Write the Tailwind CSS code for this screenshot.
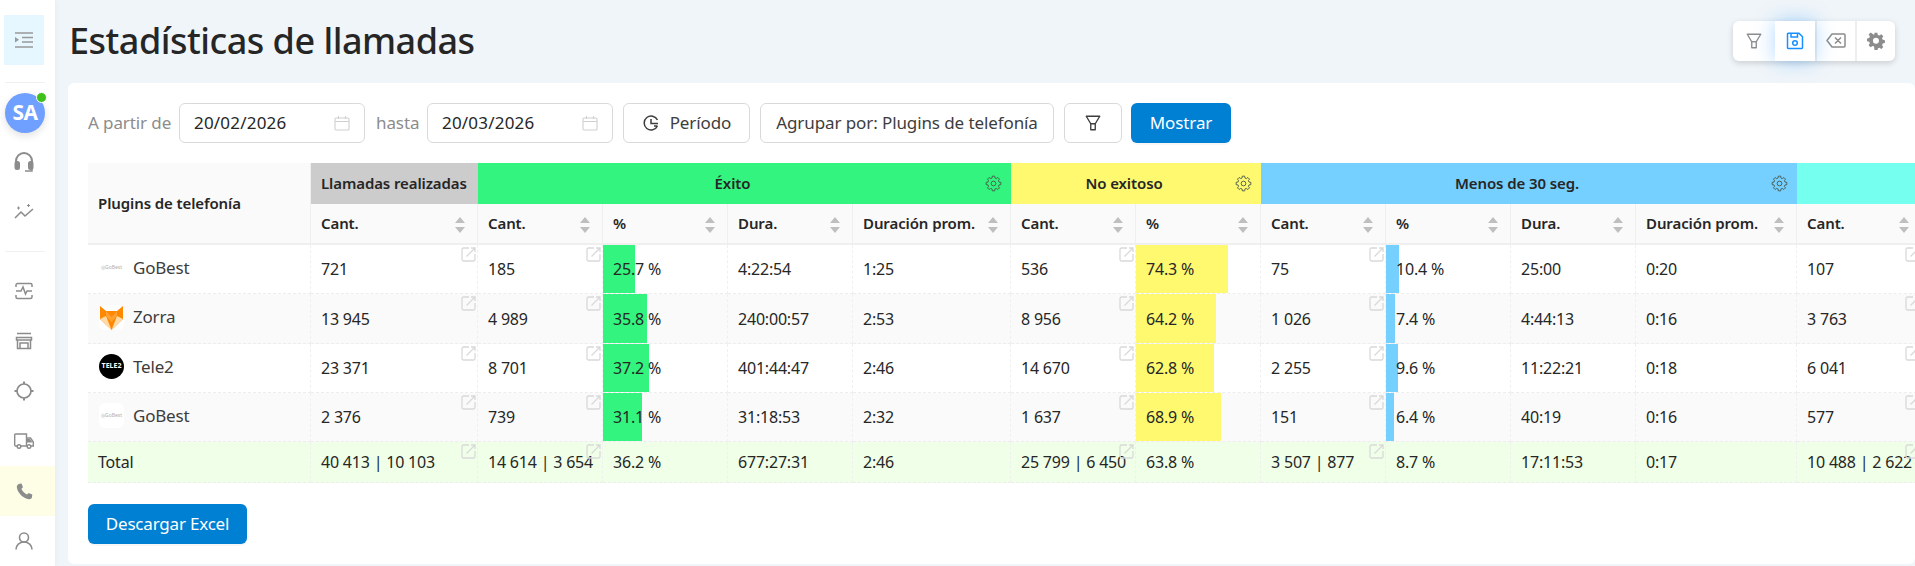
<!doctype html>
<html lang="es">
<head>
<meta charset="utf-8">
<title>Estadísticas de llamadas</title>
<script src="https://cdn.jsdelivr.net/npm/@tailwindcss/browser@4"></script>
</head>
<body class="w-[1915px] h-[566px] overflow-hidden bg-[#f0f5f9] font-['Noto_Sans',sans-serif] text-[16px] tracking-[-0.2px] text-[#262626]">
<svg class="hidden">
  <symbol id="o" viewBox="0 0 15 15"><path d="M8 1H2.500A1.500 1.500 0 0 0 1 2.500V12.500A1.500 1.500 0 0 0 2.500 14H12.500A1.500 1.500 0 0 0 14 12.500V7M5.500 9.500L14 1M10 1H14V5" fill="none" stroke="#d9d9d9" stroke-width="1.300"/></symbol>
  <symbol id="g" viewBox="0 0 24 24"><path transform="translate(12 12)" d="M7.730 2.070L10.370 1.640L10.370 -1.640L7.730 -2.070L6.930 -4L8.490 -6.170L6.170 -8.490L4 -6.930L2.070 -7.730L1.640 -10.370L-1.640 -10.370L-2.070 -7.730L-4 -6.930L-6.170 -8.490L-8.490 -6.170L-6.930 -4L-7.730 -2.070L-10.370 -1.640L-10.370 1.640L-7.730 2.070L-6.930 4L-8.490 6.170L-6.170 8.490L-4 6.930L-2.070 7.730L-1.640 10.370L1.640 10.370L2.070 7.730L4 6.930L6.170 8.490L8.490 6.170L6.930 4Z" fill="none" stroke="#4a5a4f" stroke-width="1.300" stroke-linejoin="round"/><circle cx="12" cy="12" r="3.300" fill="none" stroke="#4a5a4f" stroke-width="1.300"/></symbol>
  <symbol id="s" viewBox="0 0 10 16"><path d="M5 0L10 6H0zM5 16L0 10H10z" fill="#bfbfbf"/></symbol>
  <symbol id="f" viewBox="0 0 24 24"><path d="M3 3H21L15 13V21H9V13z" fill="none" stroke="currentColor" stroke-width="1.800" stroke-linejoin="round"/><path d="M9 13H15" stroke="currentColor" stroke-width="1.800"/></symbol>
  <symbol id="c" viewBox="0 0 16 16"><path d="M1 4A1 1 0 0 1 2 3H14A1 1 0 0 1 15 4V14A1 1 0 0 1 14 15H2A1 1 0 0 1 1 14ZM1 6.500H15M4.500 1V4M11.500 1V4" fill="none" stroke="#d0d0d0" stroke-width="1.100"/></symbol>
</svg>
<div class="flex h-full">
  <aside class="w-[55px] shrink-0 h-full bg-white flex flex-col items-stretch shadow-[1px_0_6px_rgba(0,0,0,0.04)] z-10">
    <div class="pt-[15px] pl-[4px]">
      <div class="w-[40px] h-[50px] bg-[#e6f7ff] flex items-center justify-center">
        <svg class="w-[18px] h-[16px]" viewBox="0 0 18 16" fill="none" stroke="#999" stroke-width="1.500"><path d="M0 1H18M7 5.500H18M7 10H18M0 15H18"/><path d="M0 5L4 7.800L0 10.500Z" fill="#999" stroke="none"/></svg>
      </div>
    </div>
    <div class="mt-[17px] mx-[5px] w-[40px] h-px bg-[#f0f0f0]"></div>
    <div class="relative mt-[10px] ml-[5px] size-[40px] rounded-full bg-[#6f9fff] text-white font-bold text-[21px] tracking-[-0.5px] flex items-center justify-center shadow-[0_3px_8px_rgba(0,0,0,0.12)]">SA
      <span class="absolute -top-[1px] -right-[2px] size-[11px] rounded-full bg-[#3fc11a] border-[1.500px] border-white"></span>
    </div>
    <div class="h-[50px] mt-[4px] flex items-center justify-center pr-[7px]">
      <svg class="size-[22px]" viewBox="0 0 22 22" fill="none" stroke="#8c8c8c" stroke-width="2"><path d="M3 13V10A8 8 0 0 1 19 10V13"/><rect x="2.500" y="11" width="3.500" height="7" rx="1.500" fill="#8c8c8c"/><rect x="16" y="11" width="3.500" height="7" rx="1.500" fill="#8c8c8c"/><path d="M19 18V20H12" stroke-width="1.400"/></svg>
    </div>
    <div class="h-[49px] flex items-center justify-center pr-[7px]">
      <svg class="size-[20px]" viewBox="0 0 20 20" fill="none" stroke="#8c8c8c" stroke-width="1.600"><path d="M1 16L7 10L11 14L19 7" stroke-linejoin="round"/><path d="M3 6H6M4.500 4.500V7.500M13 3.500H16M14.500 2V5" stroke-width="1"/></svg>
    </div>
    <div class="mt-[15px] mx-[5px] w-[40px] h-px bg-[#f0f0f0]"></div>
    <div class="h-[50px] mt-[14px] flex items-center justify-center pr-[7px]">
      <svg class="size-[18px]" viewBox="0 0 18 18" fill="none" stroke="#8c8c8c" stroke-width="1.500"><path d="M1 5V3A1.500 1.500 0 0 1 2.500 1.500H15.500A1.500 1.500 0 0 1 17 3V5M1 13V15A1.500 1.500 0 0 0 2.500 16.500H15.500A1.500 1.500 0 0 0 17 15V13M1 9H6L8 5L10.500 12L12 9H17"/></svg>
    </div>
    <div class="h-[50px] flex items-center justify-center pr-[7px]">
      <svg class="size-[18px]" viewBox="0 0 18 18" fill="none" stroke="#8c8c8c" stroke-width="1.500"><path d="M2 1.500H16M1.500 5.500H16.500L16.500 8H1.500ZM2.500 8V16.500H15.500V8M5 16.500V11H13V16.500"/></svg>
    </div>
    <div class="h-[50px] flex items-center justify-center pr-[7px]">
      <svg class="size-[20px]" viewBox="0 0 20 20" fill="none" stroke="#8c8c8c" stroke-width="1.700"><circle cx="10" cy="10" r="7"/><path d="M10 0.500V3M10 17V19.500M0.500 10H3M17 10H19.500" stroke-width="2"/></svg>
    </div>
    <div class="h-[50px] flex items-center justify-center pr-[7px]">
      <svg class="w-[20px] h-[16px]" viewBox="0 0 20 16" fill="none" stroke="#8c8c8c" stroke-width="1.400"><path d="M3 13H1.500A1 1 0 0 1 .7 12V2A1 1 0 0 1 1.700 1H12.500V13H7M12.500 5H16.500L19.300 9V13H17M12.500 13H13"/><circle cx="5" cy="13.500" r="1.800"/><circle cx="15" cy="13.500" r="1.800"/><path d="M13 6H16L18.500 9.500H13Z" fill="#8c8c8c" stroke="none"/></svg>
    </div>
    <div class="h-[50px] bg-[#fefee6] flex items-center justify-center pr-[7px]">
      <svg class="size-[17px]" viewBox="0 0 17 17"><path d="M3.500.8L5.500.5 7 4.300 5.400 5.800C6.200 8 8.500 10.500 11 11.500L12.500 10 16.300 11.500 16 14C15.700 15.500 14.500 16.300 13 16.200 7 15.500 1.300 9.500.8 4 .7 2.500 1.800 1.200 3.500.8Z" fill="#8c8c8c"/></svg>
    </div>
    <div class="h-[50px] flex items-center justify-center pr-[7px]">
      <svg class="size-[18px]" viewBox="0 0 18 18" fill="none" stroke="#8c8c8c" stroke-width="1.600"><circle cx="9" cy="5.500" r="4.500"/><path d="M1 17.500C1 13 4.500 10 9 10S17 13 17 17.500"/></svg>
    </div>
  </aside>

  <main class="flex-1 min-w-0 h-full flex flex-col">
    <header class="h-[83px] shrink-0 flex items-center justify-between pl-[14px] pr-[20px]">
      <h1 class="text-[36px] leading-none font-medium tracking-[-0.5px] text-[#262626] -mt-[1px]">Estadísticas de llamadas</h1>
      <div class="flex w-[162px] h-[40px] -mt-[2px] rounded-md bg-white shadow-[0_2px_6px_rgba(0,0,0,0.16)]">
        <div class="w-[42px] flex items-center justify-center text-[#8c8c8c]"><svg class="size-[18px]"><use href="#f"/></svg></div>
        <div class="w-[40px] flex items-center justify-center bg-white shadow-[0_0_20px_rgba(24,144,255,0.35)] z-10">
          <svg class="size-[18px]" viewBox="0 0 18 18" fill="none" stroke="#1890ff" stroke-width="1.500"><path d="M1.500 2A.7.7 0 0 1 2.200 1.200H13L16.500 4.700V15.800A.7.7 0 0 1 15.800 16.500H2.200A.7.7 0 0 1 1.500 15.800ZM5 1.500V5H11.500V1.500"/><circle cx="9" cy="11" r="2.300"/></svg>
        </div>
        <div class="w-[40px] flex items-center justify-center border-l-2 border-[#eeeeee]">
          <svg class="w-[20px] h-[15px]" viewBox="0 0 20 15" fill="none" stroke="#8c8c8c" stroke-width="1.500"><path d="M6 1H18A1 1 0 0 1 19 2V13A1 1 0 0 1 18 14H6L1 7.500ZM9 4.500L15 10.500M15 4.500L9 10.500"/></svg>
        </div>
        <div class="w-[40px] flex items-center justify-center border-l-2 border-[#eeeeee]">
          <svg class="size-[18px]" viewBox="0 0 18 18"><path fill="#8c8c8c" fill-rule="evenodd" d="M7.500.5h3l.5 2.300 1.700.7 2-1.300 2.100 2.100-1.300 2 .7 1.700 2.300.5v3l-2.300.5-.7 1.700 1.300 2-2.100 2.100-2-1.300-1.700.7-.5 2.300h-3L7 15.200l-1.700-.7-2 1.300L1.200 13.700l1.300-2-.7-1.700L-.5 9.500v-3l2.300-.5.7-1.700-1.300-2L3.300 .2l2 1.300L7 2.800zM9 5.700a3.200 3.200 0 1 0 0 6.400 3.200 3.200 0 0 0 0-6.400z" transform="translate(.5 .3) scale(.94)"/></svg>
        </div>
      </div>
    </header>

    <section class="ml-[13px] h-[481px] bg-white rounded-md overflow-hidden pl-[20px] pt-[20px]">
      <div class="flex items-center h-[40px] text-[17px] tracking-[-0.1px]">
        <span class="w-[82px] shrink-0 text-[#8c8c8c] whitespace-nowrap mr-[9px]">A partir de</span>
        <div class="w-[186px] h-[40px] border border-[#d9d9d9] rounded-md flex items-center justify-between pl-[14px] pr-[14px] text-[#262626] tracking-[0.2px]"><span>20/02/2026</span><svg class="size-[16px]"><use href="#c"/></svg></div>
        <span class="w-[40px] shrink-0 text-[#8c8c8c] mx-[11px]">hasta</span>
        <div class="w-[186px] h-[40px] border border-[#d9d9d9] rounded-md flex items-center justify-between pl-[14px] pr-[14px] text-[#262626] tracking-[0.2px]"><span>20/03/2026</span><svg class="size-[16px]"><use href="#c"/></svg></div>
        <button class="ml-[10px] w-[127px] h-[40px] border border-[#d9d9d9] rounded-md flex items-center justify-center gap-[10px] text-[#3d3d3d]">
          <svg class="size-[18px]" viewBox="0 0 18 18" fill="none" stroke="#3d3d3d" stroke-width="1.500"><path d="M15.500 6A7 7 0 1 0 15.500 12M9 5V9.500H16M12 12H15.500"/></svg>Período</button>
        <button class="ml-[10px] w-[294px] h-[40px] border border-[#d9d9d9] rounded-md text-[#3d3d3d] whitespace-nowrap">Agrupar por: Plugins de telefonía</button>
        <button class="ml-[10px] w-[58px] h-[40px] border border-[#d9d9d9] rounded-md flex items-center justify-center text-[#3d3d3d]"><svg class="size-[18px]"><use href="#f"/></svg></button>
        <button class="ml-[9px] w-[100px] h-[40px] rounded-md bg-[#0080d2] text-white shadow-[0_2px_0_rgba(0,0,0,0.03)]">Mostrar</button>
      </div>

      <table class="mt-[20px] table-fixed w-[1834px] border-separate border-spacing-0 [&_th]:relative [&_th]:p-0 [&_th]:px-[10px] [&_th]:text-left [&_th]:font-semibold [&_th]:text-[15px] [&_th]:tracking-[-0.1px] [&_td]:relative [&_td]:p-0 [&_td]:px-[10px] [&_td]:border-b [&_td]:border-r [&_td]:border-r-[#f0f0f0] [&_td]:border-b-[#ededed] [&_td]:border-dashed [&_td]:whitespace-nowrap">
        <colgroup><col class="w-[223px]"><col class="w-[167px]"><col class="w-[125px]"><col class="w-[125px]"><col class="w-[125px]"><col class="w-[158px]"><col class="w-[125px]"><col class="w-[125px]"><col class="w-[125px]"><col class="w-[125px]"><col class="w-[125px]"><col class="w-[161px]"><col class="w-[125px]"></colgroup>
        <thead class="[&_.h2]:bg-[#fafafa] [&_.h2]:border-b-2 [&_.h2]:border-r [&_.h2]:border-[#efefef]">
          <tr class="h-[41px]">
            <th rowspan="2" class="h2 bg-[#fafafa]">Plugins de telefonía</th>
            <th class="bg-[#cccccc] whitespace-nowrap">Llamadas realizadas</th>
            <th colspan="4" class="bg-[#32f47e] !text-center !pr-[34px] font-semibold">Éxito<svg class="absolute right-[9px] top-[12px] size-[17px]"><use href="#g"/></svg></th>
            <th colspan="2" class="bg-[#fff970] !text-center !pr-[34px]">No exitoso<svg class="absolute right-[9px] top-[12px] size-[17px]"><use href="#g"/></svg></th>
            <th colspan="4" class="bg-[#75cfff] !text-center !pr-[34px]">Menos de 30 seg.<svg class="absolute right-[9px] top-[12px] size-[17px]"><use href="#g"/></svg></th>
            <th class="bg-[#75ffee]"></th>
          </tr>
          <tr class="h-[41px]">
            <th class="h2">Cant.<svg class="absolute right-[12px] top-[13px] w-[10px] h-[16px]"><use href="#s"/></svg></th>
            <th class="h2">Cant.<svg class="absolute right-[12px] top-[13px] w-[10px] h-[16px]"><use href="#s"/></svg></th>
            <th class="h2">%<svg class="absolute right-[12px] top-[13px] w-[10px] h-[16px]"><use href="#s"/></svg></th>
            <th class="h2">Dura.<svg class="absolute right-[12px] top-[13px] w-[10px] h-[16px]"><use href="#s"/></svg></th>
            <th class="h2 whitespace-nowrap">Duración prom.<svg class="absolute right-[12px] top-[13px] w-[10px] h-[16px]"><use href="#s"/></svg></th>
            <th class="h2">Cant.<svg class="absolute right-[12px] top-[13px] w-[10px] h-[16px]"><use href="#s"/></svg></th>
            <th class="h2">%<svg class="absolute right-[12px] top-[13px] w-[10px] h-[16px]"><use href="#s"/></svg></th>
            <th class="h2">Cant.<svg class="absolute right-[12px] top-[13px] w-[10px] h-[16px]"><use href="#s"/></svg></th>
            <th class="h2">%<svg class="absolute right-[12px] top-[13px] w-[10px] h-[16px]"><use href="#s"/></svg></th>
            <th class="h2">Dura.<svg class="absolute right-[12px] top-[13px] w-[10px] h-[16px]"><use href="#s"/></svg></th>
            <th class="h2 whitespace-nowrap">Duración prom.<svg class="absolute right-[12px] top-[13px] w-[10px] h-[16px]"><use href="#s"/></svg></th>
            <th class="h2">Cant.<svg class="absolute right-[12px] top-[13px] w-[10px] h-[16px]"><use href="#s"/></svg></th>
          </tr>
        </thead>
        <tbody>
          <tr class="h-[49px] bg-white">
            <td><div class="flex items-center gap-[9px] pl-[1px] -mt-[3px] text-[17px] text-[#3d3d3d]"><span class="size-[25px] rounded-md bg-white flex items-center justify-center text-[#b0b0b0] text-[5px] tracking-normal">◎GoBest</span>GoBest</div></td>
            <td>721<svg class="absolute top-[2px] right-[1px] size-[15px]"><use href="#o"/></svg></td>
            <td>185<svg class="absolute top-[2px] right-[1px] size-[15px]"><use href="#o"/></svg></td>
            <td><i class="absolute inset-y-0 left-0 bg-[#32f47e]" style="width:25.7%"></i><span class="relative">25.7 %</span></td>
            <td>4:22:54</td><td>1:25</td>
            <td>536<svg class="absolute top-[2px] right-[1px] size-[15px]"><use href="#o"/></svg></td>
            <td><i class="absolute inset-y-0 left-0 bg-[#fff970]" style="width:74.3%"></i><span class="relative">74.3 %</span></td>
            <td>75<svg class="absolute top-[2px] right-[1px] size-[15px]"><use href="#o"/></svg></td>
            <td><i class="absolute inset-y-0 left-0 bg-[#75cfff]" style="width:10.4%"></i><span class="relative">10.4 %</span></td>
            <td>25:00</td><td>0:20</td>
            <td>107<svg class="absolute top-[2px] right-[1px] size-[15px]"><use href="#o"/></svg></td>
          </tr>
          <tr class="h-[50px] bg-[#fafafa]">
            <td><div class="flex items-center gap-[9px] pl-[1px] -mt-[3px] text-[17px] text-[#3d3d3d]"><span class="size-[25px] rounded-md bg-white flex items-center justify-center"><svg class="size-[25px]" viewBox="0 0 25 25"><path d="M1 1L7 6H18L24 1V14L12.500 25L1 14Z" fill="#ff8800"/><path d="M1 14L7 11L12.500 25Z" fill="#ffd9a8"/><path d="M24 14L18 11L12.500 25Z" fill="#ffd9a8"/><path d="M7 6L12.500 12L18 6L18 11L12.500 17L7 11Z" fill="#ffa033"/></svg></span>Zorra</div></td>
            <td>13 945<svg class="absolute top-[2px] right-[1px] size-[15px]"><use href="#o"/></svg></td>
            <td>4 989<svg class="absolute top-[2px] right-[1px] size-[15px]"><use href="#o"/></svg></td>
            <td><i class="absolute inset-y-0 left-0 bg-[#32f47e]" style="width:35.8%"></i><span class="relative">35.8 %</span></td>
            <td>240:00:57</td><td>2:53</td>
            <td>8 956<svg class="absolute top-[2px] right-[1px] size-[15px]"><use href="#o"/></svg></td>
            <td><i class="absolute inset-y-0 left-0 bg-[#fff970]" style="width:64.2%"></i><span class="relative">64.2 %</span></td>
            <td>1 026<svg class="absolute top-[2px] right-[1px] size-[15px]"><use href="#o"/></svg></td>
            <td><i class="absolute inset-y-0 left-0 bg-[#75cfff]" style="width:7.4%"></i><span class="relative">7.4 %</span></td>
            <td>4:44:13</td><td>0:16</td>
            <td>3 763<svg class="absolute top-[2px] right-[1px] size-[15px]"><use href="#o"/></svg></td>
          </tr>
          <tr class="h-[49px] bg-white">
            <td><div class="flex items-center gap-[9px] pl-[1px] -mt-[3px] text-[17px] text-[#3d3d3d]"><span class="size-[25px] rounded-full bg-black text-white flex items-center justify-center text-[7px] font-bold tracking-normal">TELE2</span>Tele2</div></td>
            <td>23 371<svg class="absolute top-[2px] right-[1px] size-[15px]"><use href="#o"/></svg></td>
            <td>8 701<svg class="absolute top-[2px] right-[1px] size-[15px]"><use href="#o"/></svg></td>
            <td><i class="absolute inset-y-0 left-0 bg-[#32f47e]" style="width:37.2%"></i><span class="relative">37.2 %</span></td>
            <td>401:44:47</td><td>2:46</td>
            <td>14 670<svg class="absolute top-[2px] right-[1px] size-[15px]"><use href="#o"/></svg></td>
            <td><i class="absolute inset-y-0 left-0 bg-[#fff970]" style="width:62.8%"></i><span class="relative">62.8 %</span></td>
            <td>2 255<svg class="absolute top-[2px] right-[1px] size-[15px]"><use href="#o"/></svg></td>
            <td><i class="absolute inset-y-0 left-0 bg-[#75cfff]" style="width:9.6%"></i><span class="relative">9.6 %</span></td>
            <td>11:22:21</td><td>0:18</td>
            <td>6 041<svg class="absolute top-[2px] right-[1px] size-[15px]"><use href="#o"/></svg></td>
          </tr>
          <tr class="h-[49px] bg-[#fafafa]">
            <td><div class="flex items-center gap-[9px] pl-[1px] -mt-[3px] text-[17px] text-[#3d3d3d]"><span class="size-[25px] rounded-md bg-white flex items-center justify-center text-[#b0b0b0] text-[5px] tracking-normal">◎GoBest</span>GoBest</div></td>
            <td>2 376<svg class="absolute top-[2px] right-[1px] size-[15px]"><use href="#o"/></svg></td>
            <td>739<svg class="absolute top-[2px] right-[1px] size-[15px]"><use href="#o"/></svg></td>
            <td><i class="absolute inset-y-0 left-0 bg-[#32f47e]" style="width:31.1%"></i><span class="relative">31.1 %</span></td>
            <td>31:18:53</td><td>2:32</td>
            <td>1 637<svg class="absolute top-[2px] right-[1px] size-[15px]"><use href="#o"/></svg></td>
            <td><i class="absolute inset-y-0 left-0 bg-[#fff970]" style="width:68.9%"></i><span class="relative">68.9 %</span></td>
            <td>151<svg class="absolute top-[2px] right-[1px] size-[15px]"><use href="#o"/></svg></td>
            <td><i class="absolute inset-y-0 left-0 bg-[#75cfff]" style="width:6.4%"></i><span class="relative">6.4 %</span></td>
            <td>40:19</td><td>0:16</td>
            <td>577<svg class="absolute top-[2px] right-[1px] size-[15px]"><use href="#o"/></svg></td>
          </tr>
          <tr class="h-[41px] bg-[#f0ffe8]">
            <td>Total</td>
            <td>40 413 | 10 103<svg class="absolute top-[2px] right-[1px] size-[15px]"><use href="#o"/></svg></td>
            <td>14 614 | 3 654<svg class="absolute top-[2px] right-[1px] size-[15px]"><use href="#o"/></svg></td>
            <td>36.2 %</td><td>677:27:31</td><td>2:46</td>
            <td>25 799 | 6 450<svg class="absolute top-[2px] right-[1px] size-[15px]"><use href="#o"/></svg></td>
            <td>63.8 %</td>
            <td>3 507 | 877<svg class="absolute top-[2px] right-[1px] size-[15px]"><use href="#o"/></svg></td>
            <td>8.7 %</td><td>17:11:53</td><td>0:17</td>
            <td>10 488 | 2 622<svg class="absolute top-[2px] right-[1px] size-[15px]"><use href="#o"/></svg></td>
          </tr>
        </tbody>
      </table>
      <button class="mt-[21px] w-[159px] h-[40px] rounded-md bg-[#0080d2] text-white text-[17px] shadow-[0_2px_0_rgba(0,0,0,0.03)]">Descargar Excel</button>
    </section>
  </main>
</div>
</body>
</html>
